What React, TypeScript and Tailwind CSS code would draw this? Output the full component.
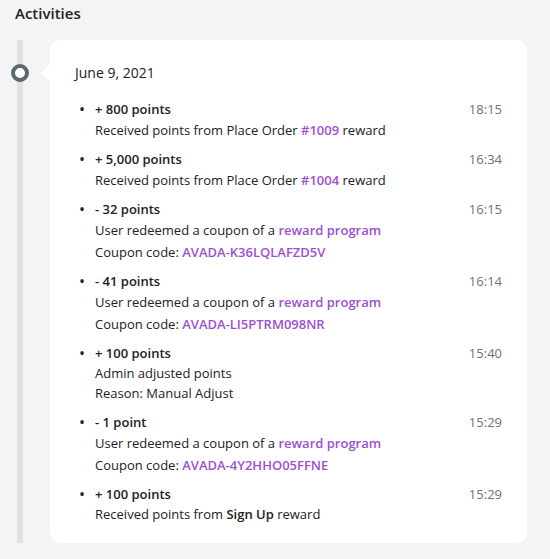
import React from "react";

type Part = { text: string; kind?: "link" | "bold" };

interface Activity {
  points: string;
  time: string;
  lines: { parts: Part[]; coupon?: boolean }[];
}

const activities: Activity[] = [
  {
    points: "+ 800 points",
    time: "18:15",
    lines: [
      {
        parts: [
          { text: "Received points from Place Order " },
          { text: "#1009", kind: "link" },
          { text: " reward" },
        ],
      },
    ],
  },
  {
    points: "+ 5,000 points",
    time: "16:34",
    lines: [
      {
        parts: [
          { text: "Received points from Place Order " },
          { text: "#1004", kind: "link" },
          { text: " reward" },
        ],
      },
    ],
  },
  {
    points: "- 32 points",
    time: "16:15",
    lines: [
      {
        parts: [
          { text: "User redeemed a coupon of a " },
          { text: "reward program", kind: "link" },
        ],
      },
      {
        coupon: true,
        parts: [
          { text: "Coupon code: " },
          { text: "AVADA-K36LQLAFZD5V", kind: "link" },
        ],
      },
    ],
  },
  {
    points: "- 41 points",
    time: "16:14",
    lines: [
      {
        parts: [
          { text: "User redeemed a coupon of a " },
          { text: "reward program", kind: "link" },
        ],
      },
      {
        coupon: true,
        parts: [
          { text: "Coupon code: " },
          { text: "AVADA-LI5PTRM098NR", kind: "link" },
        ],
      },
    ],
  },
  {
    points: "+ 100 points",
    time: "15:40",
    lines: [
      { parts: [{ text: "Admin adjusted points" }] },
      { parts: [{ text: "Reason: Manual Adjust" }] },
    ],
  },
  {
    points: "- 1 point",
    time: "15:29",
    lines: [
      {
        parts: [
          { text: "User redeemed a coupon of a " },
          { text: "reward program", kind: "link" },
        ],
      },
      {
        coupon: true,
        parts: [
          { text: "Coupon code: " },
          { text: "AVADA-4Y2HHO05FFNE", kind: "link" },
        ],
      },
    ],
  },
  {
    points: "+ 100 points",
    time: "15:29",
    lines: [
      {
        parts: [
          { text: "Received points from " },
          { text: "Sign Up", kind: "bold" },
          { text: " reward" },
        ],
      },
    ],
  },
];

function Line({ parts, coupon }: { parts: Part[]; coupon?: boolean }) {
  const hasLink = parts.some((p) => p.kind === "link");
  return (
    <p className={coupon ? "mt-[2px]" : hasLink ? "mt-[1px]" : ""}>
      {parts.map((p, i) =>
        p.kind === "link" ? (
          <span key={i} className="text-[#9e4fd1] font-semibold">
            {p.text}
          </span>
        ) : p.kind === "bold" ? (
          <span key={i} className="font-semibold">
            {p.text}
          </span>
        ) : (
          <span key={i}>{p.text}</span>
        ),
      )}
    </p>
  );
}

export default function App() {
  return (
    <div
      className="w-[550px] h-[559px] bg-[#f4f4f4] text-[#202223] text-[13px] leading-[20px]"
      style={{ fontFamily: '"Open Sans", "Noto Sans", sans-serif' }}
    >
      {/* Header */}
      <div className="px-[15px] pt-[3px] h-[40px]">
        <h2 className="text-[15px] font-semibold leading-[20px]">Activities</h2>
      </div>

      {/* Timeline */}
      <div className="flex pl-[17px]">
        <div className="relative w-[6px] h-[503px] bg-[#e1e1e1]">
          <div className="absolute left-[-6px] top-[24px] w-[18px] h-[18px] rounded-full border-[4px] border-[#5c6970] bg-white" />
        </div>

        <div className="relative ml-[27px] w-[477px] h-[503px] rounded-[10px] bg-white pl-[25px] pr-[25px] pt-[23px]">
          {/* Arrow */}
          <div className="absolute left-[-9px] top-[24px] w-0 h-0 border-y-[9px] border-y-transparent border-r-[9px] border-r-white" />

          <div className="text-[14px] font-medium leading-[20px] mb-[16px]">
            June 9, 2021
          </div>

          <ul className="flex flex-col gap-[9px]">
            {activities.map((a, i) => (
              <li key={i} className="flex">
                <span className="w-[20px] shrink-0 pl-[4px] text-[16px] leading-[20px]">•</span>
                <div className="flex-1">
                  <p className="font-semibold">{a.points}</p>
                  {a.lines.map((l, j) => (
                    <Line key={j} parts={l.parts} coupon={l.coupon} />
                  ))}
                </div>
                <span className="text-[#6d7175]">{a.time}</span>
              </li>
            ))}
          </ul>
        </div>
      </div>
    </div>
  );
}
